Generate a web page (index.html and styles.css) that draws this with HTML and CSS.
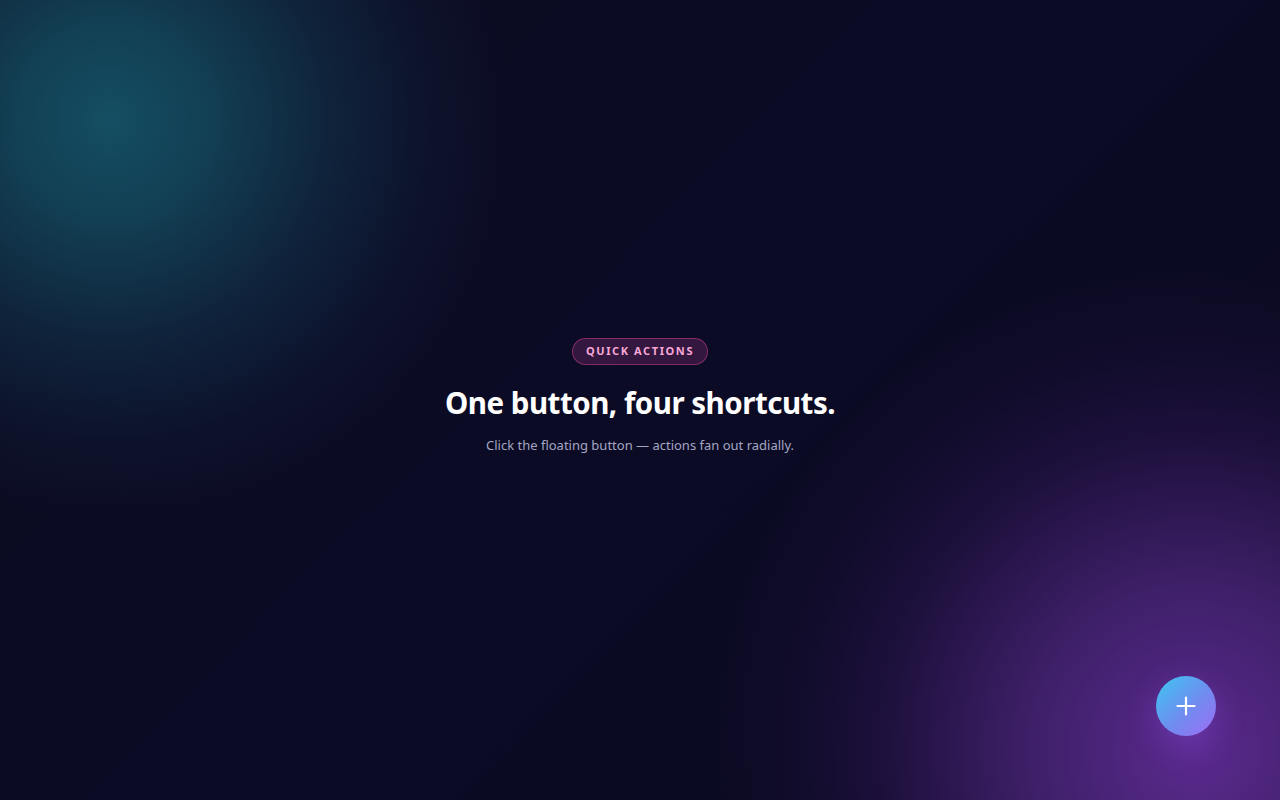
FILE: index.html
```html
<!DOCTYPE html>
<html lang="en">
  <head>
    <meta charset="UTF-8" />
    <meta name="viewport" content="width=device-width, initial-scale=1.0" />
    <title>Quick Actions</title>
    <link rel="stylesheet" href="styles.css">
  </head>
  <body>
    <main class="hero">
      <span class="badge">Quick Actions</span>
      <h1 class="title">One button, four shortcuts.</h1>
      <p class="subtitle">Click the floating button — actions fan out radially.</p>
    </main>

    <button type="button" class="fab" aria-label="Open quick actions">
      <svg width="22" height="22" viewBox="0 0 22 22" fill="none">
        <path d="M11 2.5v17M2.5 11h17" stroke="#fff" stroke-width="2.2" stroke-linecap="round" />
      </svg>
    </button>
  </body>
</html>
```

FILE: styles.css
```css
* {
  box-sizing: border-box;
  margin: 0;
  padding: 0;
}

html,
body {
  height: 100%;
}

body {
  font-family: "Noto Sans", "Open Sans", Arial, sans-serif;
  color: #fff;
  background-color: #0a0a1e;
  background-image:
    radial-gradient(circle 400px at 110px 120px, rgba(22, 90, 110, 0.85) 0%, rgba(22, 90, 110, 0.65) 25%, rgba(22, 80, 105, 0.35) 55%, rgba(22, 70, 100, 0.12) 80%, rgba(22, 70, 100, 0) 100%),
    radial-gradient(circle 480px at 1195px 750px, rgba(110, 50, 170, 0.8) 0%, rgba(95, 45, 150, 0.6) 35%, rgba(70, 30, 120, 0.3) 65%, rgba(50, 20, 90, 0.1) 85%, rgba(50, 20, 90, 0) 100%),
    linear-gradient(135deg, #0b0c20 0%, #0c0b26 50%, #0b0a20 100%);
  overflow: hidden;
}

.hero {
  min-height: 100vh;
  display: flex;
  flex-direction: column;
  align-items: center;
  justify-content: center;
  text-align: center;
  padding-bottom: 8px;
}

.badge {
  display: inline-block;
  padding: 5px 13px 6px;
  border: 1px solid rgba(236, 72, 153, 0.45);
  border-radius: 999px;
  background: rgba(168, 60, 140, 0.25);
  color: #f7a8d8;
  font-size: 11px;
  font-weight: 700;
  letter-spacing: 1.6px;
  text-transform: uppercase;
  line-height: 14px;
}

.title {
  margin-top: 18px;
  font-size: 29.5px;
  font-weight: 700;
  letter-spacing: -0.5px;
  line-height: 40px;
}

.subtitle {
  margin-top: 12px;
  font-size: 13px;
  color: #a3a6c2;
  line-height: 20px;
}

.fab {
  position: fixed;
  right: 64px;
  bottom: 64px;
  width: 60px;
  height: 60px;
  border: none;
  border-radius: 50%;
  background: linear-gradient(135deg, #3ec7f0 0%, #6f8cf0 55%, #a06cf5 100%);
  display: flex;
  align-items: center;
  justify-content: center;
  box-shadow: 0 10px 30px rgba(140, 80, 230, 0.35);
  cursor: pointer;
}
```
